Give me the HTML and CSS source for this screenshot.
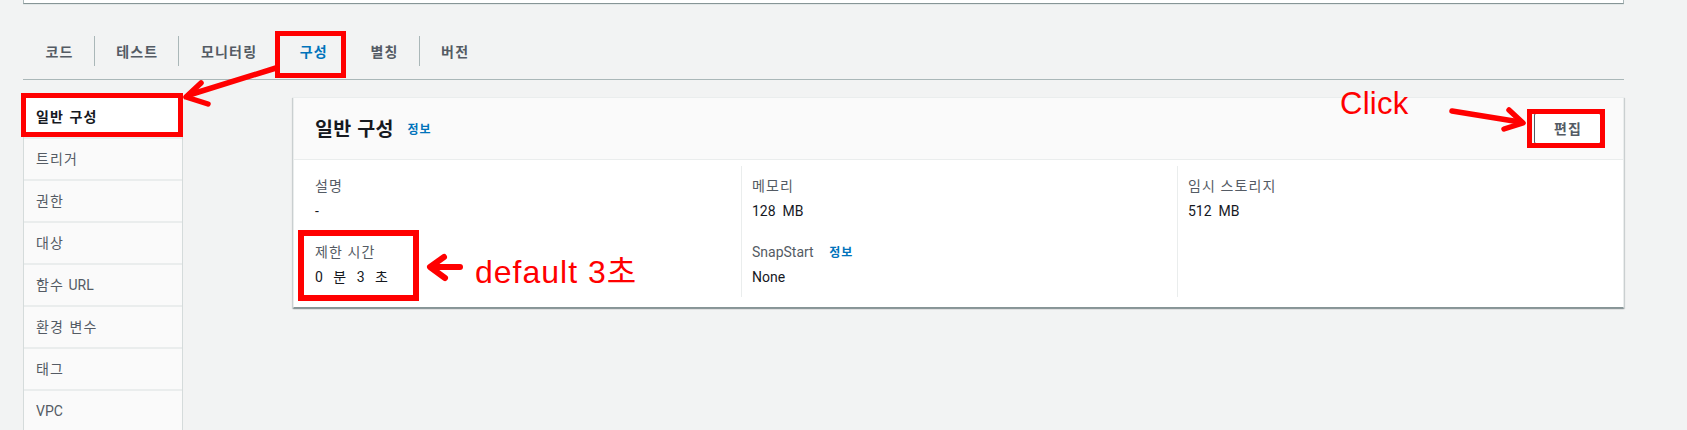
FILE: index.html
```html
<!DOCTYPE html>
<html lang="ko">
<head>
<meta charset="utf-8">
<title>Lambda 구성</title>
<link rel="stylesheet" href="styles.css">
</head>
<body>
<div class="page">
  <div class="top-box"></div>
  <nav class="tabs">
    <span class="tab">코드</span>
    <span class="tab sep">테스트</span>
    <span class="tab sep">모니터링</span>
    <span class="tab active">구성</span>
    <span class="tab">별칭</span>
    <span class="tab sep">버전</span>
  </nav>
  <div class="main">
    <ul class="side">
      <li class="side-item current">일반 구성</li>
      <li class="side-item">트리거</li>
      <li class="side-item">권한</li>
      <li class="side-item">대상</li>
      <li class="side-item"><span class="ko">함수</span> URL</li>
      <li class="side-item">환경 변수</li>
      <li class="side-item">태그</li>
      <li class="side-item">VPC</li>
    </ul>
    <section class="panel">
      <header class="panel-head">
        <h2 class="panel-title">일반 구성 <a class="info">정보</a></h2>
        <button class="btn">편집</button>
      </header>
      <div class="panel-body">
        <div class="col">
          <div class="field">
            <div class="label ko">설명</div>
            <div class="value">-</div>
          </div>
          <div class="field">
            <div class="label ko">제한 시간</div>
            <div class="value timeout">0 분 3 초</div>
          </div>
        </div>
        <div class="col">
          <div class="field">
            <div class="label ko">메모리</div>
            <div class="value">128&nbsp; MB</div>
          </div>
          <div class="field">
            <div class="label">SnapStart <a class="info">정보</a></div>
            <div class="value">None</div>
          </div>
        </div>
        <div class="col">
          <div class="field">
            <div class="label ko">임시 스토리지</div>
            <div class="value">512&nbsp; MB</div>
          </div>
        </div>
      </div>
    </section>
  </div>
</div>

<div class="notes">
  <div class="mark mark-tab"></div>
  <div class="mark mark-side"></div>
  <div class="mark mark-edit"></div>
  <div class="mark mark-timeout"></div>
  <div class="note note-click">Click</div>
  <div class="note note-default">default 3초</div>
  <svg class="arrows" width="1687" height="430" viewBox="0 0 1687 430">
    <g fill="none" stroke="#ff0000" stroke-linecap="round" stroke-linejoin="round">
      <line x1="276" y1="68" x2="189" y2="95" stroke-width="5.5"/>
      <polyline points="201,83 186,97 208,104" stroke-width="5.5"/>
      <line x1="1452" y1="111" x2="1520" y2="122" stroke-width="5.5"/>
      <polyline points="1509,110 1523,123 1504,129" stroke-width="5.5"/>
      <line x1="460" y1="267" x2="432" y2="267" stroke-width="6"/>
      <polyline points="444,257 430,267 445,278" stroke-width="6"/>
    </g>
  </svg>
</div>
</body>
</html>
```
FILE: styles.css
```css
html, body {
  margin: 0;
  padding: 0;
  height: 430px;
  overflow: hidden;
}

body {
  position: relative;
  background: #f2f3f3;
  font-family: Roboto, "Noto Sans CJK KR", sans-serif;
  font-size: 14px;
  color: #16191f;
}

.ko {
  letter-spacing: 1.1px;
}

.page {
  margin-left: 23px;
  width: 1601px;
}

.top-box {
  height: 3px;
  background: #ffffff;
  border: 1px solid #aab7b8;
  border-top: 0;
  border-bottom-color: #879596;
  box-shadow: 0 1px 0 #e3e8e8;
}

/* Tabs */
.tabs {
  display: flex;
  margin-top: 32px;
  padding-bottom: 13px;
  border-bottom: 1px solid #aab7b8;
}

.tab {
  height: 30px;
  line-height: 30px;
  padding: 0 20px 0 21.5px;
  border-left: 1px solid transparent;
  font-family: "Noto Sans CJK KR", sans-serif;
  font-weight: 700;
  letter-spacing: 1.2px;
  color: #545b64;
}

.tab.sep {
  border-left-color: #aab7b8;
}

.tab.active {
  color: #0073bb;
}

/* Main */
.main {
  display: flex;
  align-items: flex-start;
  margin-top: 17px;
}

.side {
  list-style: none;
  margin: 0;
  padding: 0;
  width: 158px;
  border-left: 1px solid #d5dbdb;
  border-right: 1px solid #d5dbdb;
  flex: none;
}

.side-item {
  height: 40px;
  line-height: 40px;
  padding-left: 12px;
  background: #fafafa;
  color: #545b64;
  border-top: 2px solid #eaeded;
  white-space: nowrap;
  letter-spacing: 1.1px;
  word-spacing: 1px;
}

.side-item:nth-child(5),
.side-item:nth-child(8) {
  letter-spacing: 0;
}

.side-item.current {
  border-top: 0;
  background: #ffffff;
  color: #16191f;
  font-weight: 700;
  box-shadow: inset 2px 0 0 #16191f;
}

/* Panel */
.panel {
  flex: 1;
  margin-left: 110px;
  background: #ffffff;
  border: 1px solid #eaeded;
  border-bottom-color: #879596;
  box-shadow: 0 1px 1px 0 rgba(0, 28, 36, 0.25), 1px 1px 1px 0 rgba(0, 28, 36, 0.12), -1px 1px 1px 0 rgba(0, 28, 36, 0.12);
}

.panel-head {
  display: flex;
  align-items: center;
  justify-content: space-between;
  height: 61px;
  padding: 0 22px 0 21px;
  background: #fafafa;
  border-bottom: 1px solid #eaeded;
}

.panel-title {
  margin: 0;
  font-family: "Noto Sans CJK KR", sans-serif;
  font-size: 19.5px;
  font-weight: 700;
  line-height: 26px;
  letter-spacing: 0.3px;
  color: #16191f;
}

.info {
  margin-left: 8px;
  font-family: "Noto Sans CJK KR", sans-serif;
  font-size: 12px;
  font-weight: 700;
  letter-spacing: 1px;
  color: #0073bb;
  text-decoration: none;
  vertical-align: 2px;
}

.btn {
  height: 31px;
  padding: 0 18px 0 19px;
  background: #ffffff;
  border: 1px solid #545b64;
  border-radius: 2px;
  font-family: "Noto Sans CJK KR", sans-serif;
  font-size: 14px;
  font-weight: 700;
  letter-spacing: 1.1px;
  color: #545b64;
  line-height: 29px;
}

.panel-body {
  display: grid;
  grid-template-columns: repeat(3, 1fr);
  padding: 6px 10px 10px 11px;
}

.col {
  padding: 10px 10px 9px 10px;
}

.col + .col {
  border-left: 1px solid #eaeded;
}

.field + .field {
  margin-top: 20px;
}

.label {
  height: 20px;
  line-height: 20px;
  color: #545b64;
  white-space: nowrap;
}

.label .info {
  margin-left: 12px;
  vertical-align: 0;
}

.value {
  margin-top: 4px;
  height: 22px;
  line-height: 22px;
  color: #16191f;
  white-space: nowrap;
}

.value.timeout {
  word-spacing: 6px;
  letter-spacing: 0.5px;
}

/* Annotations */
.notes {
  position: absolute;
  inset: 0;
  pointer-events: none;
}

.mark {
  position: absolute;
  box-sizing: border-box;
  border: 5px solid #ff0000;
}

.mark-tab {
  left: 275px;
  top: 31px;
  width: 71px;
  height: 47px;
}

.mark-side {
  left: 21px;
  top: 93px;
  width: 162px;
  height: 44px;
}

.mark-edit {
  left: 1527px;
  top: 109px;
  width: 78px;
  height: 39px;
}

.mark-timeout {
  left: 298px;
  top: 230px;
  width: 121px;
  height: 71px;
  border-width: 6px;
}

.note {
  position: absolute;
  font-family: "Liberation Sans", "Noto Sans CJK KR", sans-serif;
  color: #ff0000;
  line-height: 1;
  white-space: nowrap;
}

.note-click {
  left: 1340px;
  top: 88px;
  font-size: 31px;
  letter-spacing: 0.3px;
}

.note-default {
  left: 475px;
  top: 256px;
  font-size: 32px;
  letter-spacing: 1px;
}

.arrows {
  position: absolute;
  left: 0;
  top: 0;
}
```
